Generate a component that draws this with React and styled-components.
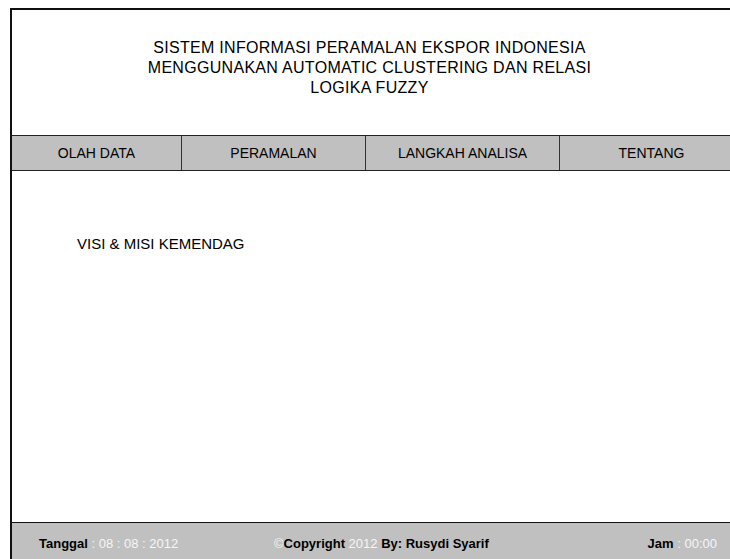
import React from 'react';
import styled, { createGlobalStyle } from 'styled-components';

const GlobalStyle = createGlobalStyle`
  html, body {
    margin: 0;
    padding: 0;
    background: #ffffff;
  }
  body {
    font-family: "Liberation Sans", Arial, sans-serif;
    color: #000;
  }
`;

const Page = styled.div`
  padding: 8px 0 0 10px;
  height: 559px;
  box-sizing: border-box;
  overflow: hidden;
`;

const Frame = styled.div`
  width: 731px;
  border: 2px solid #111;
  border-bottom: none;
  display: flex;
  flex-direction: column;
`;

const Header = styled.div`
  height: 125px;
  display: flex;
  flex-direction: column;
  align-items: center;
  justify-content: center;
  padding-right: 16px;
  padding-bottom: 10px;
  box-sizing: border-box;
  text-align: center;
  font-size: 16px;
  line-height: 20px;
  letter-spacing: 0.3px;
  text-transform: uppercase;
`;

const Nav = styled.nav`
  display: grid;
  grid-template-columns: 169px 184px 194px 1fr;
  height: 36px;
  background: #c0c0c0;
  border-top: 1px solid #222;
  border-bottom: 1px solid #222;
  box-sizing: border-box;
`;

const NavItem = styled.div`
  display: flex;
  align-items: center;
  justify-content: center;
  font-size: 14px;
  border-left: ${p => (p.$first ? 'none' : '1px solid #333')};
`;

const Content = styled.main`
  height: 351px;
  padding: 64px 0 0 65px;
  box-sizing: border-box;
  font-size: 15px;
`;

const Footer = styled.footer`
  display: grid;
  grid-template-columns: 235px 1fr auto;
  align-items: center;
  height: 40px;
  padding: 0 26px 0 27px;
  background: #c0c0c0;
  border-top: 1px solid #111;
  font-size: 13px;
`;

const Label = styled.span`
  font-weight: bold;
  color: #000;
`;

const Value = styled.span`
  color: #f6f6f6;
`;

const menu = ['OLAH DATA', 'PERAMALAN', 'LANGKAH ANALISA', 'TENTANG'];

export default function App() {
  return (
    <>
      <GlobalStyle />
      <Page>
        <Frame>
          <Header>
            <div>SISTEM INFORMASI PERAMALAN EKSPOR INDONESIA</div>
            <div>MENGGUNAKAN AUTOMATIC CLUSTERING DAN RELASI</div>
            <div>LOGIKA FUZZY</div>
          </Header>

          <Nav>
            {menu.map((item, i) => (
              <NavItem key={item} $first={i === 0}>{item}</NavItem>
            ))}
          </Nav>

          <Content>VISI &amp; MISI KEMENDAG</Content>

          <Footer>
            <span>
              <Label>Tanggal</Label> <Value>: 08 : 08 : 2012</Value>
            </span>
            <span>
              <Value>©</Value><Label>Copyright</Label> <Value>2012</Value> <Label>By: Rusydi Syarif</Label>
            </span>
            <span>
              <Label>Jam</Label> <Value>: 00:00</Value>
            </span>
          </Footer>
        </Frame>
      </Page>
    </>
  );
}
